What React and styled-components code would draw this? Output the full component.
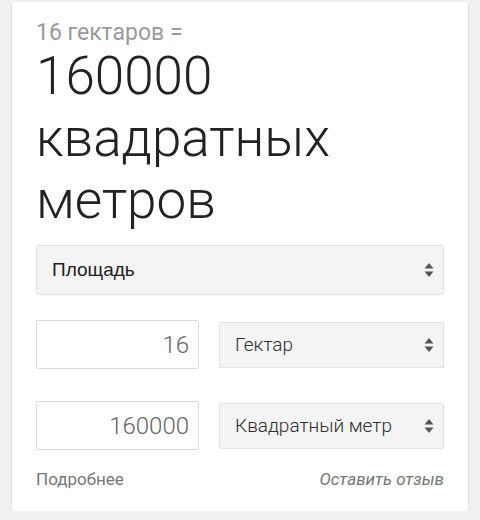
import React from "react";
import styled, { createGlobalStyle } from "styled-components";

const Global = createGlobalStyle`
  html, body { margin: 0; padding: 0; background: #f1f1f1; }
  body { font-family: Roboto, "Noto Sans", Arial, sans-serif; }
`;

const Page = styled.div`
  padding: 2px 12px 0 12px;
`;

const Card = styled.div`
  background: #fff;
  border-radius: 2px;
  box-shadow: 0 1px 3px rgba(0, 0, 0, 0.12);
  padding: 17px 24px 20px 24px;
  height: 509px;
  box-sizing: border-box;
  display: flex;
  flex-direction: column;
`;

const Source = styled.div`
  font-size: 23px;
  line-height: 28px;
  color: #9a9a9a;
  font-weight: 400;
`;

const Result = styled.div`
  font-size: 53px;
  line-height: 62px;
  font-weight: 300;
  color: #222;
  margin-top: -2px;
`;

const Arrows = () => (
  <svg width="10" height="16" viewBox="0 0 10 16">
    <path d="M5 1 L9.5 6.5 L0.5 6.5 Z" fill="#555" />
    <path d="M5 15 L9.5 9.5 L0.5 9.5 Z" fill="#555" />
  </svg>
);

const SelectBox = styled.div`
  display: flex;
  align-items: center;
  justify-content: space-between;
  box-sizing: border-box;
  height: ${(p) => p.$h}px;
  background: #f4f4f4;
  border: 1px solid #e2e2e2;
  border-radius: 2px;
  padding: 0 9px 0 15px;
  font-family: ${(p) => (p.$native ? '"Liberation Sans", Arial, sans-serif' : 'Roboto, "Noto Sans", sans-serif')};
  font-size: 19px;
  font-weight: ${(p) => (p.$native ? 400 : 300)};
  color: ${(p) => (p.$native ? "#1e1e1e" : "#2e2e2e")};
  flex: 1;
`;

const Row = styled.div`
  display: flex;
  align-items: center;
  gap: 20px;
  margin-top: ${(p) => p.$mt}px;
`;

const NumberBox = styled.div`
  box-sizing: border-box;
  width: 163px;
  height: 49px;
  border: 1px solid #dcdcdc;
  border-radius: 2px;
  background: #fff;
  display: flex;
  align-items: center;
  justify-content: flex-end;
  padding-right: 9px;
  font-size: 24px;
  font-weight: 300;
  color: #666;
`;

const Footer = styled.div`
  display: flex;
  justify-content: space-between;
  margin-top: 18px;
  font-size: 17px;
  line-height: 22px;
  color: #777;
`;

const Feedback = styled.span`
  font-style: italic;
`;

export default function App() {
  return (
    <>
      <Global />
      <Page>
        <Card>
          <Source>16 гектаров =</Source>
          <Result>
            160000
            <br />
            квадратных
            <br />
            метров
          </Result>
          <Row $mt={14}>
            <SelectBox $h={50} $native>
              <span>Площадь</span>
              <Arrows />
            </SelectBox>
          </Row>
          <Row $mt={25}>
            <NumberBox>16</NumberBox>
            <SelectBox $h={46}>
              <span>Гектар</span>
              <Arrows />
            </SelectBox>
          </Row>
          <Row $mt={32}>
            <NumberBox>160000</NumberBox>
            <SelectBox $h={46}>
              <span>Квадратный метр</span>
              <Arrows />
            </SelectBox>
          </Row>
          <Footer>
            <span>Подробнее</span>
            <Feedback>Оставить отзыв</Feedback>
          </Footer>
        </Card>
      </Page>
    </>
  );
}
